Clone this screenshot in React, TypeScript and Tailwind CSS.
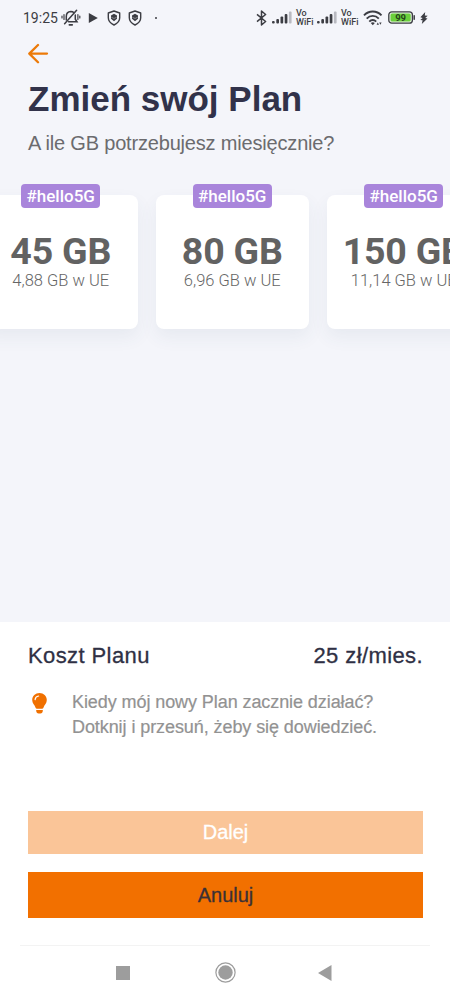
import type { ReactNode } from "react";

const plans = [
  { size: "45 GB", roaming: "4,88 GB w UE" },
  { size: "80 GB", roaming: "6,96 GB w UE" },
  { size: "150 GB", roaming: "11,14 GB w UE" },
];

const BellOff = () => (
  <svg width="20" height="18" viewBox="0 0 20 18" fill="none" stroke="#3c3d43" strokeWidth="1.5" strokeLinecap="round">
    <path d="M5.3 11V7.5C5.3 4.6 7 2.7 9.8 2.5c1.3 0 2.3.4 3 1.1M14.3 6v4.2l1.7 2.6H7.5" />
    <path d="M15.6 1.2 3.6 14.8" />
    <path d="M8.4 15.8h2.8" strokeWidth="1.8" />
    <path d="M3 5.5v5M1 7v2M16.9 5.5v5M18.8 7v2" strokeWidth="1.2" />
  </svg>
);

const Shield = () => (
  <svg width="14" height="16" viewBox="0 0 14 16" fill="none" stroke="#3c3d43" strokeWidth="1.4" strokeLinejoin="round">
    <path d="M7 1 12.7 3v4.8c0 3.1-2.2 5.6-5.7 7.2-3.5-1.6-5.7-4.1-5.7-7.2V3z" />
    <path d="M7 3.8 10 5.6v3.2L7 11.2 4 8.8V5.6z" fill="#3c3d43" stroke="none" />
    <path d="m4.3 7.2 2.7 1.3 2.7-1.3" stroke="#b9bac0" strokeWidth=".6" />
  </svg>
);

const Bluetooth = () => (
  <svg width="11" height="16" viewBox="0 0 11 16" fill="none" stroke="#3c3d43" strokeWidth="1.5" strokeLinejoin="round">
    <path d="m1 4.3 8.6 7.2L5.5 15V1l4.1 3.5L1 11.7" />
  </svg>
);

const Signal = () => (
  <svg width="20" height="13" viewBox="0 0 20 13" fill="#3c3d43">
    <rect x="0" y="10" width="2.7" height="2.5" rx="1" />
    <rect x="4.3" y="8" width="2.7" height="4.5" rx="1" />
    <rect x="8.5" y="5.5" width="2.7" height="7" rx="1" />
    <rect x="12.7" y="3" width="2.7" height="9.5" rx="1" />
    <rect x="16.9" y="0.5" width="2.7" height="12" rx="1" fill="#b9bac1" />
  </svg>
);

const VoWifi = () => (
  <div className="flex w-[18px] flex-col font-['Roboto',sans-serif] text-[9px] leading-[9px] font-medium text-[#3c3d43]">
    <span>Vo</span>
    <span>WiFi</span>
  </div>
);

const Wifi = () => (
  <svg width="20" height="16" viewBox="0 0 20 16" fill="none" stroke="#3c3d43" strokeWidth="1.9">
    <path d="M1 5.4c4.8-5.2 12.7-5.2 17.5 0M3.7 8.6c3.4-3.6 8.7-3.6 12.1 0M6.3 11.6c2-2.1 4.9-2.1 6.9 0" />
    <path d="m9.8 15.2-2-2.2c1.2-1.1 2.8-1.1 4 0z" fill="#3c3d43" stroke="none" />
    <path d="m13.6 14.8 1.2-2.3 1.2 2.300zM16.200 12.500h2.400l-1.200 2.300z" fill="#3c3d43" stroke="none" />
  </svg>
);

const Battery = () => (
  <svg width="28" height="13" viewBox="0 0 28 13">
    <rect x=".8" y=".8" width="23.6" height="11.4" rx="3" fill="#e6efe3" stroke="#3c3d43" strokeWidth="1.3" />
    <rect x="2.5" y="2.4" width="20.2" height="8.2" rx="1.5" fill="#6bd03c" />
    <path d="M26.2 4.8v3.4" stroke="#3c3d43" strokeWidth="1.5" strokeLinecap="round" />
    <text x="12.6" y="9.7" textAnchor="middle" fontFamily="Roboto, sans-serif" fontSize="9.5" fontWeight="700" fill="#26451b">
      99
    </text>
  </svg>
);

const Bolt = () => (
  <svg width="8" height="12" viewBox="0 0 8 12" fill="#3c3d43">
    <path d="M5.2 0 .4 5.200l2.300.700L.300 8l2.300.300L1.800 12l5.700-5.400-2.300-.700 2.500-2.100-2.900-.300z" />
  </svg>
);

const StatusBar = () => (
  <div className="flex h-[35px] items-center justify-between pr-[22px] pl-[23px]">
    <div className="flex items-center">
      <span className="w-[38px] font-['Roboto',sans-serif] text-[14px] leading-4 text-[#3c3d43]">19:25</span>
      <BellOff />
      <svg className="ml-[7px]" width="10" height="10" viewBox="0 0 10 10" fill="#3c3d43">
        <path d="M.8 0 9.800 5 .8 10z" />
      </svg>
      <div className="ml-[9px] flex gap-[7px]">
        <Shield />
        <Shield />
      </div>
      <span className="ml-[13px] size-[2px] rounded-full bg-[#3c3d43]" />
    </div>
    <div className="flex items-center">
      <Bluetooth />
      <div className="ml-[5px] flex items-center gap-[4px]">
        <Signal />
        <VoWifi />
      </div>
      <div className="ml-[3px] flex items-center gap-[4px]">
        <Signal />
        <VoWifi />
      </div>
      <div className="ml-[4px] flex items-center">
        <Wifi />
      </div>
      <div className="ml-[5px] flex items-center gap-[4px]">
        <Battery />
        <Bolt />
      </div>
    </div>
  </div>
);

const PlanCard = ({ size, roaming }: { size: string; roaming: string }) => (
  <div className="relative flex h-[134px] w-[153.5px] shrink-0 flex-col items-center rounded-[8px] bg-white pt-[37px] font-['Roboto',sans-serif] whitespace-nowrap shadow-[0_8px_18px_rgba(60,80,110,0.07)]">
    <span className="absolute -top-[11.5px] flex h-[24px] w-[79px] items-center justify-center rounded-[4px] bg-[#a985db] pt-[2px] text-[17px] font-medium text-white">
      #hello5G
    </span>
    <span className="text-[37.5px] leading-[39px] font-bold tracking-[-0.2px] text-[#626262]">{size}</span>
    <span className="text-[16.5px] leading-[20px] font-light text-[#666]">{roaming}</span>
  </div>
);

const Button = ({ className, children }: { className: string; children: ReactNode }) => (
  <button className={`block w-full text-[20px] [-webkit-text-stroke:0.3px] ${className}`}>{children}</button>
);

const App = () => {
  return (
    <div className="flex h-[999px] w-[450px] flex-col overflow-hidden bg-[#f4f5fa] font-['Liberation_Sans',Arial,sans-serif]">
      <StatusBar />

      {/* Header */}
      <div className="px-[28px] pt-[8px]">
        <svg width="21" height="21" viewBox="0 0 21 21" fill="none" stroke="#ec7a08" strokeWidth="2.3" strokeLinecap="round" strokeLinejoin="round">
          <path d="M19 10.6H1.5M10 2 1.3 10.6 10 19.3" />
        </svg>
        <h1 className="mt-[15px] text-[35px] leading-[40px] font-bold whitespace-nowrap text-[#31324a]">Zmień swój Plan</h1>
        <p className="mt-[12px] text-[20px] leading-[24px] tracking-[-0.18px] whitespace-nowrap text-[#6b6b6e]">
          A ile GB potrzebujesz miesięcznie?
        </p>
      </div>

      {/* Plans */}
      <div className="-ml-[16px] flex gap-[18px] pt-[40px]">
        {plans.map((plan) => (
          <PlanCard key={plan.size} size={plan.size} roaming={plan.roaming} />
        ))}
      </div>

      {/* Summary */}
      <div className="mt-auto flex h-[377px] flex-col bg-white">
        <div className="px-[28px] pt-[20px]">
          <div className="flex justify-between text-[22px] leading-[28px] tracking-[0.4px] whitespace-nowrap text-[#2f3044] [-webkit-text-stroke:0.3px]">
            <span>Koszt Planu</span>
            <span className="-mr-px">25 zł/mies.</span>
          </div>
          <div className="mt-[19px] flex text-[#929292]">
            <svg className="mt-[4px] ml-[4px] shrink-0" width="15" height="21" viewBox="0 0 15 21">
              <path d="M7.5 0C3.4 0 .2 3.1.2 7c0 3.3 2.3 4.6 3.3 7.6.2.7.5 1.1 1.2 1.1h5.6c.7 0 1-.4 1.2-1.1 1-3 3.3-4.3 3.3-7.6 0-3.9-3.2-7-7.3-7z" fill="#f07000" />
              <path d="M4.2 16.9h6.6v.8c0 1.6-1 2.8-2.4 2.8H6.6c-1.4 0-2.4-1.2-2.4-2.8z" fill="#f07000" />
              <path d="M3.1 6.6c.2-2 1.5-3.3 3.5-3.6" fill="none" stroke="#fff" strokeWidth="1.2" strokeLinecap="round" />
            </svg>
            <p className="ml-[25px] pt-px text-[18px] leading-[25px] tracking-[-0.08px] whitespace-nowrap [-webkit-text-stroke:0.2px]">
              Kiedy mój nowy Plan zacznie działać?
              <br />
              Dotknij i przesuń, żeby się dowiedzieć.
            </p>
          </div>
        </div>
        <div className="mt-auto pr-[27px] pb-[27px] pl-[28px]">
          <Button className="h-[43px] bg-[#fac598] pb-px text-white">Dalej</Button>
          <Button className="mt-[18px] h-[46px] bg-[#f27000] text-[#3b3036]">Anuluj</Button>
        </div>
        <div className="mx-[20px] h-px bg-[#f3f3f3]" />
        {/* System navigation */}
        <div className="flex h-[53px] items-center pl-[116px] text-[#9d9d9d]">
          <span className="size-[14px] bg-current" />
          <svg className="ml-[85px]" width="21" height="21" viewBox="0 0 21 21">
            <circle cx="10.5" cy="10.5" r="9.6" fill="none" stroke="currentColor" strokeWidth="1.2" />
            <circle cx="10.5" cy="10.5" r="7.2" fill="currentColor" />
          </svg>
          <svg className="ml-[82px]" width="14" height="16" viewBox="0 0 14 16" fill="currentColor">
            <path d="M13.5 0v16L0 8z" />
          </svg>
        </div>
      </div>
    </div>
  );
};

export default App;
